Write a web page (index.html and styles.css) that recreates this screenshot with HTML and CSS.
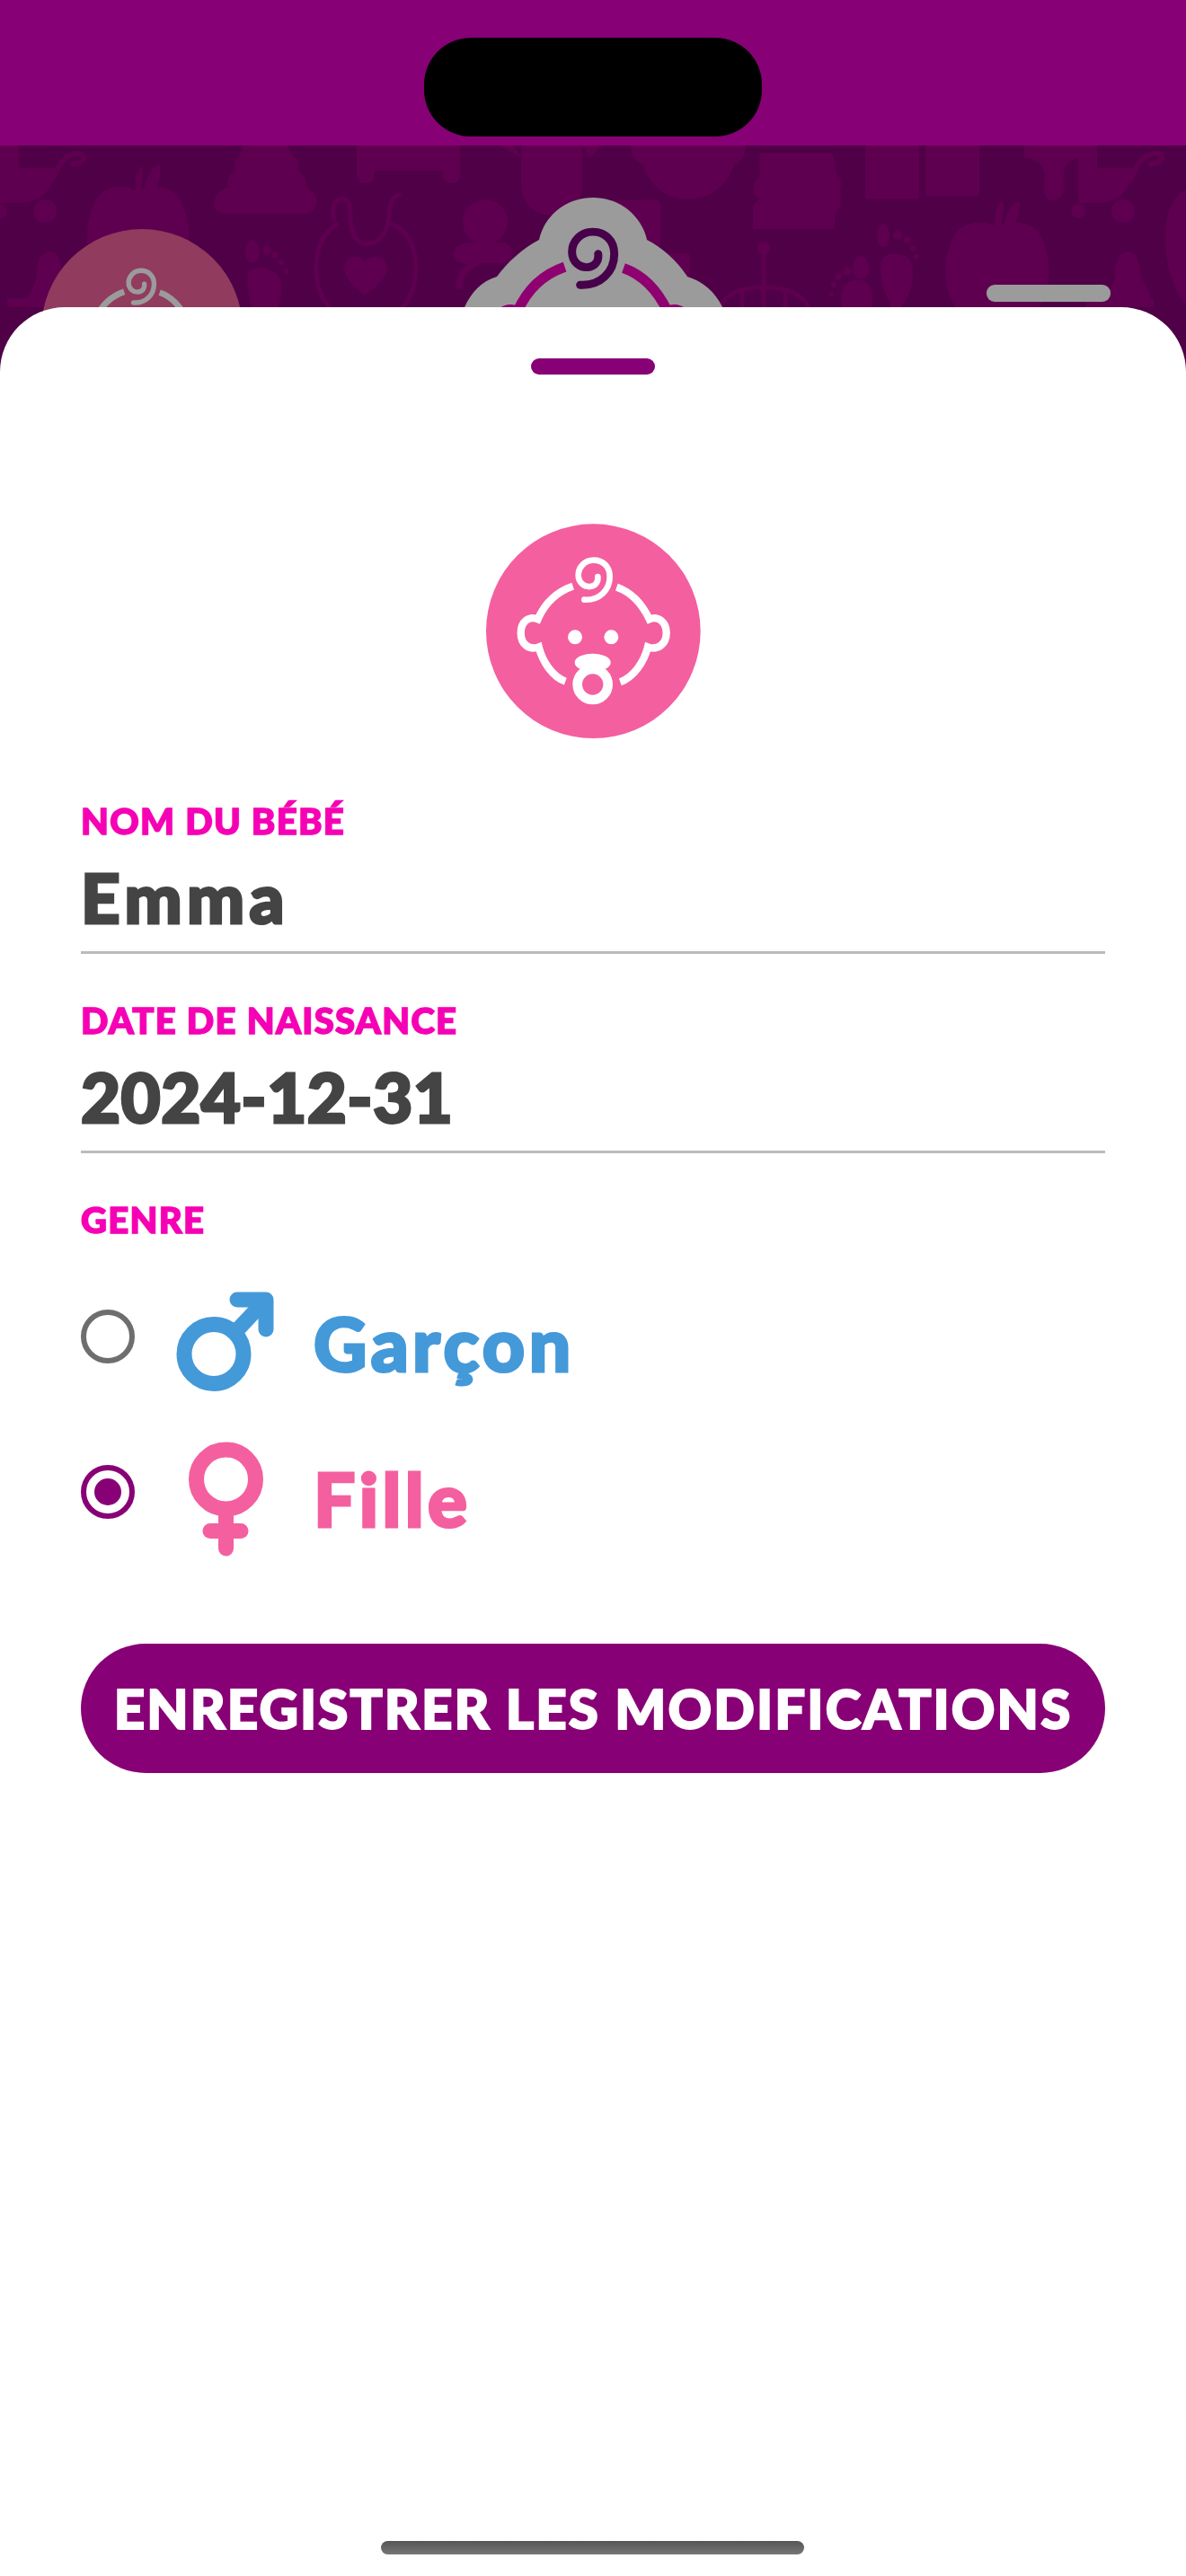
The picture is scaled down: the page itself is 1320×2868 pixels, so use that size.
FILE: index.html
```html
<!DOCTYPE html>
<html lang="fr">
  <head>
    <meta charset="UTF-8" />
    <meta name="viewport" content="width=device-width, initial-scale=1.0" />
    <title>Modifier le bébé</title>
    <link rel="stylesheet" href="styles.css">
  </head>
  <body>
    <main class="page">
      <div class="status">
        <div class="status__island"></div>
      </div>

      <div class="backdrop">
        <svg class="backdrop__art" viewBox="0 162 1320 260" width="1320" height="260">
          <defs>
            <g id="baby-swirl" fill="none" stroke="currentColor" stroke-width="20" stroke-linecap="round">
              <path d="M450 322C500 325 535 290 535 245C535 210 510 190 482 190C450 190 430 215 430 240C430 265 450 280 470 278C488 276 497 262 495 245" />
            </g>
            <g id="baby-head" fill="none" stroke="currentColor" stroke-width="25">
              <path d="M412 277C360 295 320 330 295 387C265 375 238 395 238 433C238 470 265 492 298 480C310 530 345 580 387 595" />
              <path d="M558 280C600 295 640 330 667 387C695 375 724 395 724 433C724 470 695 492 662 480C650 530 615 580 570 597" />
            </g>
            <g id="baby-face" fill="currentColor">
              <circle cx="419" cy="447" r="24" />
              <circle cx="540" cy="447" r="24" />
              <ellipse cx="478" cy="532" rx="60" ry="30" />
              <circle cx="478" cy="605" r="51" fill="none" stroke="currentColor" stroke-width="32" />
            </g>
            <g id="tile" fill="#5e004f">
              <!-- stroller -->
              <path d="M0 162H21V187H62C60 207 48 226 22 226H0Z" />
              <path d="M58 200C66 182 72 172 85 171C97 170 96 182 81 183" fill="none" stroke="#5e004f" stroke-width="6" stroke-linecap="round" />
              <circle cx="50" cy="235" r="13" />
              <circle cx="0" cy="235" r="8" />
              <!-- bottle -->
              <path d="M55 280C64 280 68 290 69 303C71 316 80 322 80 332H84V342H8V332H30C36 322 40 316 41 303C42 290 46 280 55 280Z" />
              <!-- apple -->
              <path d="M153 213C165 205 190 205 200 222C215 248 214 290 198 325C190 342 170 350 153 345C135 350 118 342 110 325C94 290 92 248 107 222C118 205 140 205 153 213Z" />
              <path d="M152 214C148 202 152 190 158 184C160 194 158 206 157 214ZM161 214C161 200 168 186 178 183C180 196 176 208 169 214Z" />
              <!-- pile -->
              <path d="M270 162H320C322 168 324 172 330 176C334 182 332 186 331 190C338 194 342 200 340 208C350 212 353 220 352 226C351 234 346 238 338 238H252C243 238 238 234 238 226C238 218 245 212 254 208C252 200 255 194 262 190C260 184 260 178 266 174C268 170 270 166 270 162Z" />
              <!-- foot -->
              <ellipse cx="281" cy="280" rx="8" ry="13" />
              <circle cx="297" cy="279" r="5" />
              <circle cx="306" cy="284" r="4" />
              <circle cx="313" cy="292" r="3.5" />
              <circle cx="318" cy="302" r="3" />
              <path d="M277 302C288 294 308 300 312 312C316 328 308 346 302 362H286C280 345 272 315 277 302Z" />
              <!-- bib -->
              <g fill="none" stroke="#5e004f" stroke-width="5" stroke-linecap="round">
                <path d="M372 244C368 232 372 222 381 221C390 222 390 232 390 246C392 264 400 272 408 272C422 272 432 258 433 240C433 226 438 217 445 217" />
                <path d="M375 250C355 262 351 285 352 305C354 335 375 360 408 362C440 360 462 335 463 300C463 272 452 255 436 250" />
              </g>
              <path d="M406 329C395 319 383 310 383 298C383 285 400 282 406 291C412 282 431 285 431 298C431 310 418 319 406 329Z" />
              <!-- table -->
              <path d="M397 162H512V196C512 201 508 204 503 204C497 204 493 201 493 196V190H417V196C417 201 413 204 407 204C401 204 397 201 397 196Z" />
              <!-- pacifier -->
              <circle cx="540" cy="247" r="25" />
              <path d="M520 270C508 272 505 278 505 284C505 291 512 294 522 293H558C568 294 571 288 570 282C570 275 565 270 558 270Z" />
              <path d="M532 292C515 298 510 310 512 322" fill="none" stroke="#5e004f" stroke-width="8" />
              <!-- feeding bottle top -->
              <path d="M556 162H572L580 176L580 162H648V162L656 176L670 162V162H648V205C648 226 635 240 614 240C595 240 580 226 580 205V176Z" />
              <!-- boxes behind the head -->
              <path d="M647 223H731C734 223 735 225 735 228V282H764C767 282 768 284 768 287V342H647Z" />
              <!-- bowl -->
              <path d="M702 162H830C830 176 822 182 817 184C808 208 790 222 766 222C742 222 724 208 716 184C710 182 702 176 702 162Z" />
              <!-- cake -->
              <path d="M846 170H925C930 176 930 186 930 192C936 198 938 206 934 212C938 220 936 232 929 238V255H838V232C838 226 842 224 846 222C836 218 836 200 846 198C846 188 844 178 846 170Z" />
              <!-- mobile -->
              <circle cx="850" cy="276" r="7" />
              <g fill="none" stroke="#5e004f" stroke-width="5">
                <path d="M850 280V342" />
                <path d="M802 342C808 326 826 320 850 320C874 320 892 326 900 342" />
                <path d="M826 322V342M874 322V342" />
              </g>
              <!-- nappies -->
              <rect x="963" y="162" width="60" height="60" rx="2" />
              <rect x="1030" y="162" width="60" height="56" rx="2" />
              <!-- feet -->
              <path d="M982 288C990 278 1012 282 1015 294C1019 312 1012 332 1002 342H992C984 326 976 300 982 288Z" />
              <ellipse cx="983" cy="262" rx="7" ry="13" />
              <circle cx="999" cy="262" r="5" />
              <circle cx="1010" cy="267" r="4" />
              <circle cx="1016" cy="276" r="3.5" />
              <circle cx="1020" cy="286" r="3" />
              <path d="M937 342C932 318 946 310 958 312C972 314 972 330 970 342Z" />
              <ellipse cx="958" cy="298" rx="9" ry="13" />
              <circle cx="943" cy="302" r="5" />
              <circle cx="933" cy="308" r="4" />
              <circle cx="928" cy="317" r="3.5" />
              <circle cx="925" cy="327" r="3" />
              <!-- spoon -->
              <path d="M1140 162H1200V176C1192 178 1186 182 1184 190C1183 200 1184 208 1184 212C1183 219 1178 223 1172 223C1166 223 1162 219 1162 212C1162 206 1164 198 1162 190C1160 182 1150 176 1140 176Z" />
              <!-- second apple -->
              <path d="M1110 253C1122 245 1148 245 1158 262C1172 288 1170 325 1156 342H1064C1050 325 1048 288 1062 262C1072 245 1098 245 1110 253Z" />
              <path d="M1108 252C1106 240 1110 228 1116 222C1118 232 1116 244 1114 252ZM1118 252C1118 238 1126 226 1135 224C1136 236 1132 246 1126 252Z" />
            </g>
          </defs>

          <rect x="0" y="162" width="1320" height="260" fill="#4f0047" />
          <use href="#tile" />
          <use href="#tile" x="1200" />

          <!-- dimmed avatar on the left -->
          <circle cx="158" cy="367" r="112" fill="#913b5e" />
          <g transform="translate(27 250) scale(.27)" color="#9b9b9b">
            <use href="#baby-swirl" />
            <use href="#baby-head" />
          </g>

          <!-- dimmed avatar in the middle -->
          <path d="M517 342C525 325 536 313 553 308C565 292 582 276 600 267C606 240 630 220 660 220C690 220 714 240 720 267C738 276 755 292 765 308C782 313 796 325 804 342V422H517Z" fill="#9b9b9b" />
          <g transform="translate(444 173) scale(.448)">
            <use href="#baby-swirl" color="#47004a" />
            <use href="#baby-head" color="#8f0070" />
          </g>
        </svg>
        <div class="backdrop__grip"></div>
      </div>

      <section class="sheet">
        <div class="sheet__grip"></div>

        <svg class="avatar" viewBox="122 68 717 717" width="239" height="239">
          <circle cx="480" cy="427" r="358" fill="#f45f9f" />
          <g color="#fff">
            <use href="#baby-swirl" />
            <use href="#baby-head" />
            <use href="#baby-face" />
          </g>
        </svg>

        <div class="field">
          <div class="field__label">NOM DU BÉBÉ</div>
          <div class="field__value field__value--name">Emma</div>
        </div>
        <div class="field">
          <div class="field__label">DATE DE NAISSANCE</div>
          <div class="field__value">2024-12-31</div>
        </div>

        <div class="field__label genre">GENRE</div>

        <div class="choice">
          <span class="radio"></span>
          <svg class="choice__icon" viewBox="190 1430 130 130" width="130" height="130">
            <g fill="none" stroke="#4499d9" stroke-width="17">
              <circle cx="238" cy="1507.5" r="33" />
              <path d="M262 1483L294 1449" />
              <path d="M264 1447H296V1480" stroke-linecap="round" stroke-linejoin="round" />
            </g>
          </svg>
          <span class="choice__text choice__text--boy">Garçon</span>
        </div>
        <div class="choice">
          <span class="radio radio--on"></span>
          <svg class="choice__icon" viewBox="190 1603 130 130" width="130" height="130">
            <g fill="none" stroke="#f45f9f" stroke-width="17" stroke-linecap="round">
              <circle cx="251.5" cy="1647" r="33" />
              <path d="M251.5 1688V1724" />
              <path d="M234 1704.5H268" />
            </g>
          </svg>
          <span class="choice__text choice__text--girl">Fille</span>
        </div>

        <button class="save" type="button">ENREGISTRER LES MODIFICATIONS</button>

        <div class="home"></div>
      </section>
    </main>
  </body>
</html>
```

FILE: styles.css
```css
html,
body {
  margin: 0;
  height: 100%;
  background-color: #fff;
}
.page {
  display: flex;
  flex-direction: column;
  width: 1320px;
  height: 2868px;
  overflow: hidden;
  font-family: "Lato", "Liberation Sans", sans-serif;
  font-weight: 900;
}
.status {
  flex: 0 0 162px;
  display: flex;
  justify-content: center;
  padding-top: 42px;
  box-sizing: border-box;
  background-color: #880075;
}
.status__island {
  width: 376px;
  height: 110px;
  border-radius: 52px;
  background-color: #000;
}
.backdrop {
  position: relative;
  flex: 0 0 260px;
  margin-bottom: -80px;
}
.backdrop__art {
  display: block;
}
.backdrop__grip {
  position: absolute;
  left: 1098px;
  top: 155px;
  width: 138px;
  height: 19px;
  border-radius: 9px;
  background-color: #9b9b9b;
}
.sheet {
  position: relative;
  flex: 1 1 auto;
  display: flex;
  flex-direction: column;
  padding: 57px 90px 0;
  border-radius: 72px 72px 0 0;
  background-color: #fff;
}
.sheet__grip {
  align-self: center;
  width: 138px;
  height: 18px;
  border-radius: 9px;
  background-color: #880075;
}
.avatar {
  align-self: center;
  margin-top: 166px;
  margin-bottom: 72px;
}
.field {
  height: 222px;
}
.field__label {
  height: 40px;
  font-size: 40px;
  line-height: 40px;
  letter-spacing: 1.3px;
  color: #f500b4;
  -webkit-text-stroke: 1.5px #f500b4;
}
.field__value {
  margin-top: 20px;
  padding-bottom: 15px;
  border-bottom: 3px solid #bbb;
  font-size: 76px;
  line-height: 90px;
  letter-spacing: 0.5px;
  color: #444;
  -webkit-text-stroke: 3px #444;
}
.field__value--name {
  letter-spacing: 5.5px;
}
.genre {
  margin-bottom: 52px;
}
.choice {
  display: flex;
  align-items: center;
  height: 130px;
  margin-bottom: 43px;
}
.radio {
  flex: 0 0 60px;
  align-self: flex-start;
  box-sizing: border-box;
  display: flex;
  justify-content: center;
  align-items: center;
  height: 60px;
  margin-top: 28px;
  border: 6px solid #6e6e6e;
  border-radius: 50%;
}
.radio--on {
  border-color: #880075;
}
.radio--on::after {
  content: "";
  width: 30px;
  height: 30px;
  border-radius: 50%;
  background-color: #880075;
}
.choice__icon {
  flex: 0 0 130px;
  margin-left: 40px;
  margin-right: 29px;
}
.choice__text {
  font-size: 82px;
  line-height: 130px;
  letter-spacing: 4.4px;
}
.choice__text--boy {
  color: #4499d9;
  -webkit-text-stroke: 3px #4499d9;
}
.choice__text--girl {
  color: #f45f9f;
  -webkit-text-stroke: 3px #f45f9f;
}
.save {
  height: 144px;
  margin-top: 54px;
  padding: 0;
  border: 0;
  border-radius: 72px;
  background-color: #880075;
  color: #fff;
  font-family: inherit;
  font-weight: 900;
  font-size: 60px;
  letter-spacing: 2.1px;
  -webkit-text-stroke: 2px #fff;
}
.home {
  position: absolute;
  left: 424px;
  bottom: 24px;
  width: 471px;
  height: 15px;
  border-radius: 8px;
  background: linear-gradient(#555, #777);
}
```
